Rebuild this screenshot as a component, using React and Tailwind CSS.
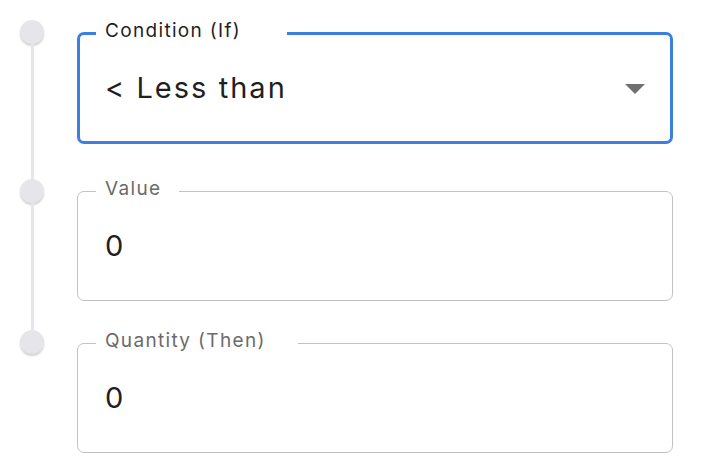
import React from 'react'

const FONT = { fontFamily: 'Inter, "Noto Sans", sans-serif' }

function Node() {
  return <div className="h-[24px] w-[24px] shrink-0 rounded-full bg-[#e5e5ea] shadow-[0_2px_2px_rgba(0,0,0,0.18)]" />
}

function Field({ label, notch, value, focused, select }) {
  return (
    <div
      className={
        'relative flex items-center rounded-[7px] ' +
        (focused ? 'h-[112px] border-[3px] border-[#3a7fe1] pl-[25px]' : 'h-[110px] border border-[#c2c2c2] pl-[27px]')
      }
    >
      <span
        className={
          'absolute bg-white pl-[9px] text-[19px] leading-[22px] tracking-[0.07em] ' +
          (focused ? 'left-[16px] top-[-15px] text-[#1f1f1f]' : 'left-[18px] top-[-14px] text-[#6b6b6b]')
        }
        style={{ width: notch }}
      >
        {label}
      </span>
      <span className="text-[29px] tracking-[0.07em] text-[#1f1f1f]">{value}</span>
      {select && (
        <span className="absolute right-[25px] top-[49px] h-0 w-0 border-x-[10px] border-t-[10px] border-x-transparent border-t-[#707070]" />
      )}
    </div>
  )
}

export default function App() {
  return (
    <div className="h-[474px] w-[710px] bg-white pl-[20px] pr-[37px] pt-[20px]" style={FONT}>
      <div className="flex">
        <div className="flex w-[24px] flex-col items-center">
          <Node />
          <div className="w-[3px] flex-1 bg-[#e5e5ea]" />
        </div>
        <div className="ml-[33px] flex-1 pb-[35px] pt-[12px]">
          <Field label="Condition (If)" notch={191} value="< Less than" focused select />
        </div>
      </div>
      <div className="flex">
        <div className="flex w-[24px] flex-col items-center">
          <Node />
          <div className="w-[3px] flex-1 bg-[#e5e5ea]" />
        </div>
        <div className="ml-[33px] flex-1 pb-[29px] pt-[12px]">
          <Field label="Value" notch={83} value="0" />
        </div>
      </div>
      <div className="flex">
        <div className="flex w-[24px] flex-col items-center">
          <Node />
        </div>
        <div className="ml-[33px] flex-1 pt-[13px]">
          <Field label="Quantity (Then)" notch={202} value="0" />
        </div>
      </div>
    </div>
  )
}
